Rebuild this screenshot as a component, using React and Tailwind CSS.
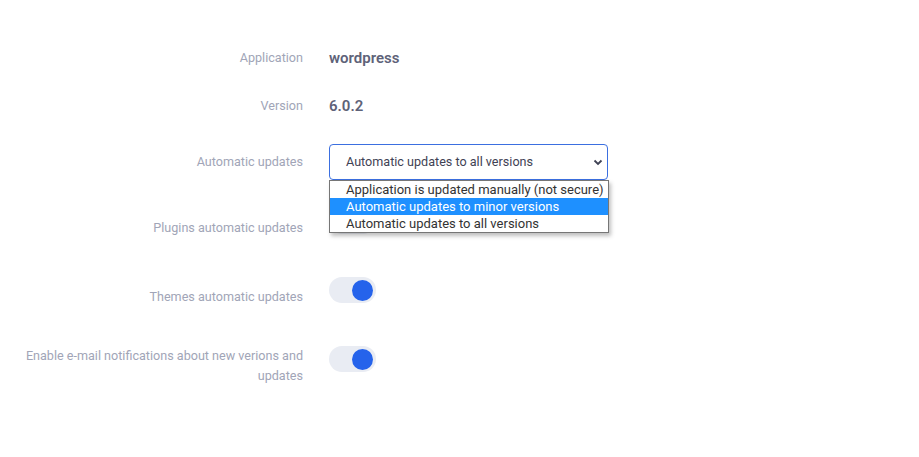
const font = { fontFamily: 'Roboto, "Liberation Sans", sans-serif' }

function Toggle() {
  return (
    <div className="relative h-[26px] w-[47px] shrink-0 rounded-full bg-[#e9ecf3]">
      <div className="absolute right-[3px] top-[3px] h-[21px] w-[21px] rounded-full bg-[#2563eb]" />
    </div>
  )
}

function Row({ label, labelClass = '', className = '', children }) {
  return (
    <div className={`flex leading-5 ${className}`}>
      <div className={`ml-[24px] w-[279px] text-right text-[12.6px] leading-5 text-[#a1a5b7] ${labelClass}`}>
        {label}
      </div>
      <div className="ml-[26px] leading-5">{children}</div>
    </div>
  )
}

const options = [
  'Application is updated manually (not secure)',
  'Automatic updates to minor versions',
  'Automatic updates to all versions',
]

export default function App() {
  return (
    <div className="h-[457px] w-[919px] bg-white pt-[48px]" style={font}>
      <Row label="Application" className="items-center">
        <div className="text-[15px] font-semibold leading-5 text-[#5e6278]">wordpress</div>
      </Row>
      <Row label="Version" className="mt-[28px] items-center">
        <div className="text-[15px] font-semibold leading-5 text-[#5e6278]">6.0.2</div>
      </Row>
      <Row label="Automatic updates" className="relative z-10 mt-[28px] items-center">
        <div className="relative">
          <div className="flex h-[36px] w-[279px] items-center justify-between rounded-[4px] border border-[#3b6fe0] pl-[16px] pr-[4px] text-[12.6px] text-[#3f4254]">
            <span>Automatic updates to all versions</span>
            <svg width="10" height="10" viewBox="0 0 10 10" className="text-[#3f4254]">
              <path d="M1.5 3.5 L5 7 L8.5 3.5" fill="none" stroke="currentColor" strokeWidth="1.8" />
            </svg>
          </div>
          <div className="absolute left-0 top-[36px] w-[280px] border border-[#767676] bg-white shadow-[2px_3px_4px_rgba(0,0,0,0.25)]">
            {options.map((o, i) => (
              <div
                key={o}
                className={`h-[17px] pl-[16px] text-[13px] leading-[17px] ${
                  i === 1 ? 'bg-[#1e90ff] text-white' : 'text-[#333]'
                }`}
              >
                {o}
              </div>
            ))}
          </div>
        </div>
      </Row>
      <Row label="Plugins automatic updates" labelClass="pt-[10px]" className="mt-[28px] items-start">
        <Toggle />
      </Row>
      <Row label="Themes automatic updates" labelClass="pt-[10px]" className="mt-[39px] items-start">
        <Toggle />
      </Row>
      <Row
        label="Enable e-mail notifications about new verions and updates"
        className="mt-[39px] items-start"
      >
        <Toggle />
      </Row>
    </div>
  )
}
